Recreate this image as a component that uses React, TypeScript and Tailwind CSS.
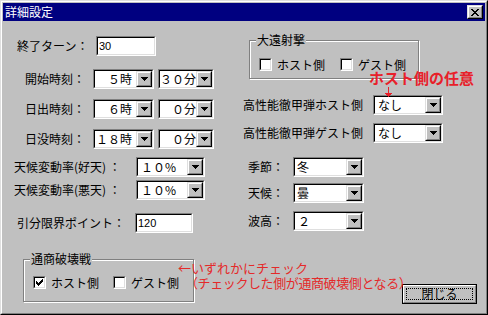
import React from "react";

const sunken = "border border-t-[#808080] border-l-[#808080] border-r-white border-b-white";
const sunkenInner = "border border-t-black border-l-black border-r-[#dfdfdf] border-b-[#dfdfdf]";
const raised = "border border-t-[#dfdfdf] border-l-[#dfdfdf] border-r-black border-b-black";
const raisedInner = "border border-t-white border-l-white border-r-[#808080] border-b-[#808080]";

// pixel glyphs for the little bitmaps
const closeX = ["XX....XX", ".XX..XX.", "..XXXX..", "...XX...", "..XXXX..", ".XX..XX.", "XX....XX"];
const tick = ["......X", ".....XX", "X...XXX", "XX.XXX.", "XXXXX..", ".XXX...", "..X...."];

function Pixels({ rows, color = "#000" }: { rows: string[]; color?: string }) {
  return (
    <svg width={rows[0].length} height={rows.length} shapeRendering="crispEdges">
      {rows.map((r, y) =>
        r.split("").map((c, x) => (c === "X" ? <rect key={`${x}-${y}`} x={x} y={y} width="1" height="1" fill={color} /> : null))
      )}
    </svg>
  );
}

function DownTri() {
  return (
    <svg width="7" height="4" viewBox="0 0 7 4" shapeRendering="crispEdges">
      <path d="M0 0H7V1H6V2H5V3H4V4H3V3H2V2H1V1H0Z" fill="#000" />
    </svg>
  );
}

function Combo({ className, value, pad = "pl-[2px]" }: { className: string; value: string; pad?: string }) {
  return (
    <div className={`flex h-5 ${sunken} ${className}`}>
      <div className={`flex flex-1 bg-white ${sunkenInner}`}>
        <span className={`flex flex-1 items-center whitespace-nowrap text-[12px] leading-none ${pad}`}>{value}</span>
        <span className={`flex h-4 w-4 bg-[#c0c0c0] ${raised}`}>
          <span className={`flex flex-1 items-center justify-center ${raisedInner}`}>
            <DownTri />
          </span>
        </span>
      </div>
    </div>
  );
}

function TextBox({ className, value }: { className: string; value: string }) {
  return (
    <div className={`h-5 ${sunken} ${className}`}>
      <div className={`flex h-full items-center bg-white pl-[1px] font-['Liberation_Sans',sans-serif] text-[11px] leading-none ${sunkenInner}`}>
        {value}
      </div>
    </div>
  );
}

function Check({ on }: { on?: boolean }) {
  return (
    <span className={`flex h-[13px] w-[13px] ${sunken}`}>
      <span className={`flex flex-1 items-center justify-center bg-white ${sunkenInner}`}>
        {on && <Pixels rows={tick} />}
      </span>
    </span>
  );
}

function CheckLabel({ on, label, className = "" }: { on?: boolean; label: string; className?: string }) {
  return (
    <div className={`flex h-[13px] items-center ${className}`}>
      <Check on={on} />
      <span className="ml-[5px] text-[12px] leading-none">{label}</span>
    </div>
  );
}

function Group({ label, className, children }: { label: string; className: string; children: React.ReactNode }) {
  return (
    <div className={`relative border border-[#808080] shadow-[inset_1px_1px_0_#fff,1px_1px_0_#fff] ${className}`}>
      <span className="absolute -top-[8px] left-[6px] bg-[#c0c0c0] px-[1px] text-[12px] leading-[14px]">{label}</span>
      {children}
    </div>
  );
}

export default function App() {
  return (
    <div className="relative h-[315px] w-[488px] overflow-hidden bg-[#c0c0c0] font-['Noto_Sans_CJK_JP',sans-serif] text-black">
      <div className={`h-full ${raised}`}>
        <div className={`flex h-full flex-col p-px ${raisedInner}`}>
          {/* title bar */}
          <div className="flex h-[18px] shrink-0 items-center justify-between bg-[#000080] pl-[2px] pr-[2px]">
            <span className="text-[12px] leading-none text-white">詳細設定</span>
            <span className={`flex h-[14px] w-4 bg-[#c0c0c0] ${raised}`}>
              <span className={`flex flex-1 items-center justify-center ${raisedInner}`}>
                <Pixels rows={closeX} />
              </span>
            </span>
          </div>

          <div className="flex">
            {/* left column */}
            <div className="flex w-[240px] flex-col text-[12px] leading-none">
              <div className="mt-[15px] flex h-5 items-center">
                <span className="w-[93px] pl-[14px]">終了ターン：</span>
                <TextBox className="w-[60px]" value="30" />
              </div>
              <div className="mt-[13px] flex h-5 items-center">
                <span className="w-[90px] pl-[22px]">開始時刻：</span>
                <Combo className="w-[61px]" value="５時" pad="justify-end pr-[4px]" />
                <Combo className="ml-[4px] w-[56px]" value="３０分" pad="justify-end" />
              </div>
              <div className="mt-[10px] flex h-5 items-center">
                <span className="w-[90px] pl-[22px]">日出時刻：</span>
                <Combo className="w-[61px]" value="６時" pad="justify-end pr-[4px]" />
                <Combo className="ml-[4px] w-[56px]" value="０分" pad="justify-end" />
              </div>
              <div className="mt-[10px] flex h-5 items-center">
                <span className="w-[90px] pl-[22px]">日没時刻：</span>
                <Combo className="w-[61px]" value="１８時" pad="justify-end pr-[4px]" />
                <Combo className="ml-[4px] w-[56px]" value="０分" pad="justify-end" />
              </div>
              <div className="mt-[8px] flex h-5 items-center">
                <span className="w-[133px] whitespace-pre pl-[11px]">天候変動率(好天) ：</span>
                <Combo className="w-[69px]" value="１０%" pad="pl-[3px]" />
              </div>
              <div className="mt-[3px] flex h-5 items-center">
                <span className="w-[133px] whitespace-pre pl-[11px]">天候変動率(悪天) ：</span>
                <Combo className="w-[69px]" value="１０%" pad="pl-[3px]" />
              </div>
              <div className="mt-[13px] flex h-5 items-center">
                <span className="w-[132px] pl-[14px]">引分限界ポイント：</span>
                <TextBox className="w-[58px]" value="120" />
              </div>
            </div>

            {/* right column */}
            <div className="flex flex-1 flex-col text-[12px] leading-none">
              <Group label="大遠射撃" className="ml-[6px] mt-[19px] h-[39px] w-[170px]">
                <div className="ml-[9px] mt-[17px] flex">
                  <CheckLabel label="ホスト側" />
                  <CheckLabel label="ゲスト側" className="ml-[15px]" />
                </div>
              </Group>
              <div className="mt-[16px] flex h-5 items-center">
                <span className="w-[130px]">高性能徹甲弾ホスト側</span>
                <Combo className="w-[70px]" value="なし" pad="pl-[3px]" />
              </div>
              <div className="mt-[8px] flex h-5 items-center">
                <span className="w-[130px]">高性能徹甲弾ゲスト側</span>
                <Combo className="w-[70px]" value="なし" pad="pl-[3px]" />
              </div>
              <div className="mt-[14px] flex h-5 items-center">
                <span className="w-[50px] pl-[5px]">季節：</span>
                <Combo className="w-[71px]" value="冬" pad="pl-[2px]" />
              </div>
              <div className="mt-[6px] flex h-5 items-center">
                <span className="w-[50px] pl-[5px]">天候：</span>
                <Combo className="w-[71px]" value="曇" pad="pl-[2px]" />
              </div>
              <div className="mt-[8px] flex h-5 items-center">
                <span className="w-[50px] pl-[5px]">波高：</span>
                <Combo className="w-[71px]" value="２" pad="pl-[3px]" />
              </div>
            </div>
          </div>

          {/* bottom */}
          <div className="mt-[26px] flex items-start">
            <Group label="通商破壊戦" className="ml-[20px] h-[43px] w-[171px]">
              <div className="ml-[9px] mt-[16px] flex">
                <CheckLabel on label="ホスト側" />
                <CheckLabel label="ゲスト側" className="ml-[14px]" />
              </div>
            </Group>
            <div className="ml-auto mr-[8px] mt-[25px] h-5 w-[75px] border border-black">
              <div className={`flex h-full p-[2px] ${raisedInner}`}>
                <div className="flex flex-1 items-center justify-center border border-dotted border-black text-[12px] leading-none">
                  閉じる
                </div>
              </div>
            </div>
          </div>
        </div>
      </div>

      {/* red notes pasted over the dialog */}
      <span className="absolute left-[369px] top-[70px] whitespace-nowrap text-[15px] font-bold leading-[15px] text-[#e8202a]">
        ホスト側の任意
      </span>
      <svg className="absolute left-[385px] top-[87px]" width="7" height="10" viewBox="0 0 7 10" shapeRendering="crispEdges">
        <path d="M3 0H4V6H3Z M0 6H7V7H6V8H5V9H4V10H3V9H2V8H1V7H0Z" fill="#e8202a" />
      </svg>
      <div className="absolute left-[178px] top-[260px] whitespace-nowrap text-[13px] leading-[15px] text-[#e42a2a]">
        <div>←いずれかにチェック</div>
        <div className="pl-[7px] tracking-[-0.4px]">（チェックした側が通商破壊側となる）</div>
      </div>
    </div>
  );
}
